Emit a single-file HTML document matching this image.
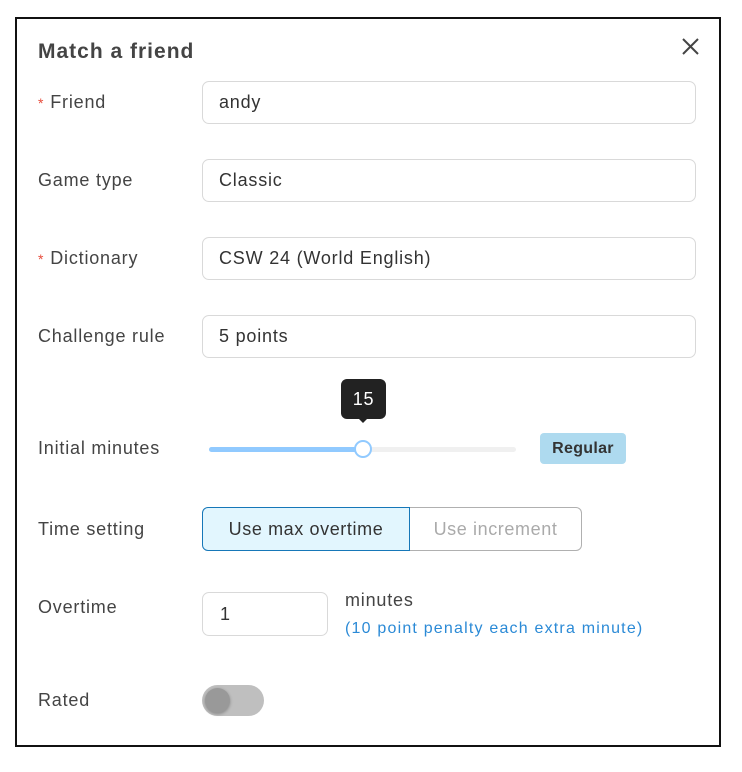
<!DOCTYPE html>
<html><head><style>
body{margin:0;width:742px;height:772px;background:#fff;font-family:"Liberation Sans",sans-serif;color:#444;position:relative;overflow:hidden;letter-spacing:0.8px}
.box{position:absolute;left:15px;top:17px;width:702px;height:726px;border:2px solid #111}
.a{position:absolute}
.lbl{font-size:18px;color:#444}
.req{color:#e74c3c;font-size:14px;margin-right:6px}
.inp{position:absolute;left:202px;width:494px;height:43px;border:1px solid #d9d9d9;border-radius:7px;box-sizing:border-box;font-size:18px;padding:0 16px;line-height:41px;color:#333}
</style></head><body>
<div class="box"></div>
<div class="a" style="left:38px;top:40px;font-size:21px;font-weight:bold;color:#444;letter-spacing:1px">Match a friend</div>
<svg class="a" style="left:681px;top:37px" width="19" height="19"><path d="M2 2L17 17M17 2L2 17" stroke="#444" stroke-width="2"/></svg>

<div class="a lbl" style="left:38px;top:92px"><span class="req">*</span>Friend</div>
<div class="inp" style="top:81px">andy</div>
<div class="a lbl" style="left:38px;top:170px">Game type</div>
<div class="inp" style="top:159px">Classic</div>
<div class="a lbl" style="left:38px;top:248px"><span class="req">*</span>Dictionary</div>
<div class="inp" style="top:237px">CSW 24 (World English)</div>
<div class="a lbl" style="left:38px;top:326px">Challenge rule</div>
<div class="inp" style="top:315px">5 points</div>

<div class="a lbl" style="left:38px;top:438px">Initial minutes</div>
<div class="a" style="left:209px;top:447px;width:307px;height:5px;border-radius:3px;background:#f0f0f0"></div>
<div class="a" style="left:209px;top:447px;width:155px;height:5px;border-radius:3px;background:#91caff"></div>
<div class="a" style="left:354px;top:440px;width:14px;height:14px;border-radius:50%;border:2px solid #91caff;background:#fff"></div>
<div class="a" style="left:341px;top:379px;width:45px;height:40px;border-radius:6px;background:#222;color:#fff;font-size:18px;text-align:center;line-height:40px">15</div>
<div class="a" style="left:358px;top:418px;width:0;height:0;border-left:5px solid transparent;border-right:5px solid transparent;border-top:5px solid #222"></div>
<div class="a" style="left:540px;top:433px;width:86px;height:31px;border-radius:4px;background:#aedaef;font-size:16px;font-weight:bold;text-align:center;line-height:31px;color:#333;letter-spacing:0.3px">Regular</div>

<div class="a lbl" style="left:38px;top:519px">Time setting</div>
<div class="a" style="left:202px;top:507px;width:208px;height:44px;box-sizing:border-box;border:1px solid #1677b8;border-radius:6px 0 0 6px;background:#e2f6fe;font-size:18px;text-align:center;line-height:42px;color:#333;letter-spacing:0.6px">Use max overtime</div>
<div class="a" style="left:410px;top:507px;width:172px;height:44px;box-sizing:border-box;border:1px solid #b0b0b0;border-left:none;border-radius:0 6px 6px 0;font-size:18px;text-align:center;line-height:42px;color:#aaa;letter-spacing:0.6px">Use increment</div>

<div class="a lbl" style="left:38px;top:597px">Overtime</div>
<div class="a" style="left:202px;top:592px;width:126px;height:44px;box-sizing:border-box;border:1px solid #d9d9d9;border-radius:7px;font-size:18px;padding-left:17px;line-height:42px;color:#333">1</div>
<div class="a" style="left:345px;top:590px;font-size:18px;color:#444">minutes</div>
<div class="a" style="left:345px;top:620px;font-size:16px;color:#2b8ad6;letter-spacing:1.2px">(10 point penalty each extra minute)</div>

<div class="a lbl" style="left:38px;top:690px">Rated</div>
<div class="a" style="left:202px;top:685px;width:62px;height:31px;border-radius:16px;background:#bfbfbf"></div>
<div class="a" style="left:205px;top:688px;width:25px;height:25px;border-radius:50%;background:#999;box-shadow:0 1px 3px rgba(0,0,0,.3)"></div>
</body></html>
